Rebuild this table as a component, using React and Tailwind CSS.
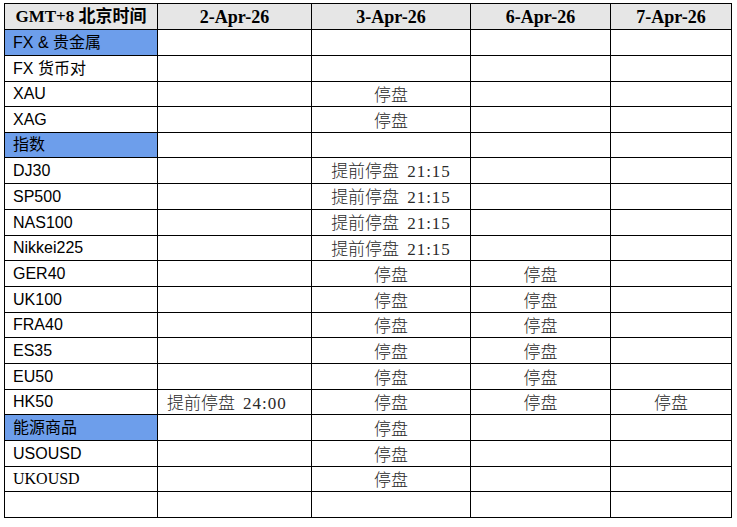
import React from "react";

const dates = ["2-Apr-26", "3-Apr-26", "6-Apr-26", "7-Apr-26"];

// name, blue section, cells for the four dates
const rows = [
  { name: "FX & 贵金属", blue: true, cells: ["", "", "", ""], h: 26 },
  { name: "FX 货币对", cells: ["", "", "", ""], h: 26 },
  { name: "XAU", cells: ["", "停盘", "", ""], h: 25 },
  { name: "XAG", cells: ["", "停盘", "", ""], h: 26 },
  { name: "指数", blue: true, cells: ["", "", "", ""], h: 25 },
  { name: "DJ30", cells: ["", "提前停盘 21:15", "", ""], h: 26 },
  { name: "SP500", cells: ["", "提前停盘 21:15", "", ""], h: 26 },
  { name: "NAS100", cells: ["", "提前停盘 21:15", "", ""], h: 26 },
  { name: "Nikkei225", cells: ["", "提前停盘 21:15", "", ""], h: 25 },
  { name: "GER40", cells: ["", "停盘", "停盘", ""], h: 26 },
  { name: "UK100", cells: ["", "停盘", "停盘", ""], h: 26 },
  { name: "FRA40", cells: ["", "停盘", "停盘", ""], h: 25 },
  { name: "ES35", cells: ["", "停盘", "停盘", ""], h: 26 },
  { name: "EU50", cells: ["", "停盘", "停盘", ""], h: 26 },
  { name: "HK50", cells: ["提前停盘 24:00", "停盘", "停盘", "停盘"], h: 25 },
  { name: "能源商品", blue: true, cells: ["", "停盘", "", ""], h: 26 },
  { name: "USOUSD", cells: ["", "停盘", "", ""], h: 26 },
  { name: "UKOUSD", serif: true, cells: ["", "停盘", "", ""], h: 25 },
  { name: "", cells: ["", "", "", ""], h: 26 },
];

function Note({ text }) {
  if (!text) return null;
  const [cn, time] = text.split(" ");
  return (
    <span className="whitespace-nowrap">
      <span className="font-light font-['Noto_Sans_CJK_SC',sans-serif]">{cn}</span>
      {time && (
        <span className="pl-[8px] tracking-[1px] font-['Liberation_Serif',serif]">{time}</span>
      )}
    </span>
  );
}

export default function App() {
  return (
    <div className="min-h-[527px] bg-white pl-[4px] pt-[3px]">
      <table className="table-fixed border-collapse w-[728px] text-[#2a2a2a]">
        <colgroup>
          <col className="w-[153px]" />
          <col className="w-[154px]" />
          <col className="w-[159px]" />
          <col className="w-[140px]" />
          <col className="w-[121px]" />
        </colgroup>
        <thead>
          <tr className="h-[26px] bg-[#e6e6e6] text-black">
            <th className="border border-black p-0 text-center text-[17px] font-bold font-['Liberation_Serif','Noto_Sans_CJK_SC',serif] leading-none">
              GMT+8 北京时间
            </th>
            {dates.map((d) => (
              <th
                key={d}
                className="border border-black p-0 text-center text-[18px] font-bold font-['Liberation_Serif',serif] leading-none"
              >
                {d}
              </th>
            ))}
          </tr>
        </thead>
        <tbody>
          {rows.map((r, i) => (
            <tr key={i} style={{ height: r.h }}>
              <td
                className={
                  "border border-black p-0 pl-[8px] text-[16px] leading-none text-black " +
                  (r.blue ? "bg-[#6d9eeb] " : "") +
                  (r.serif
                    ? "font-['Liberation_Serif',serif]"
                    : "font-['Liberation_Sans','Noto_Sans_CJK_SC',sans-serif]")
                }
              >
                {r.name}
              </td>
              {r.cells.map((c, j) => (
                <td
                  key={j}
                  className={
                    "border border-black p-0 text-[17px] leading-none " +
                    (i === 14 && j === 0 ? "text-left pl-[9px]" : "text-center")
                  }
                >
                  <Note text={c} />
                </td>
              ))}
            </tr>
          ))}
        </tbody>
      </table>
    </div>
  );
}
